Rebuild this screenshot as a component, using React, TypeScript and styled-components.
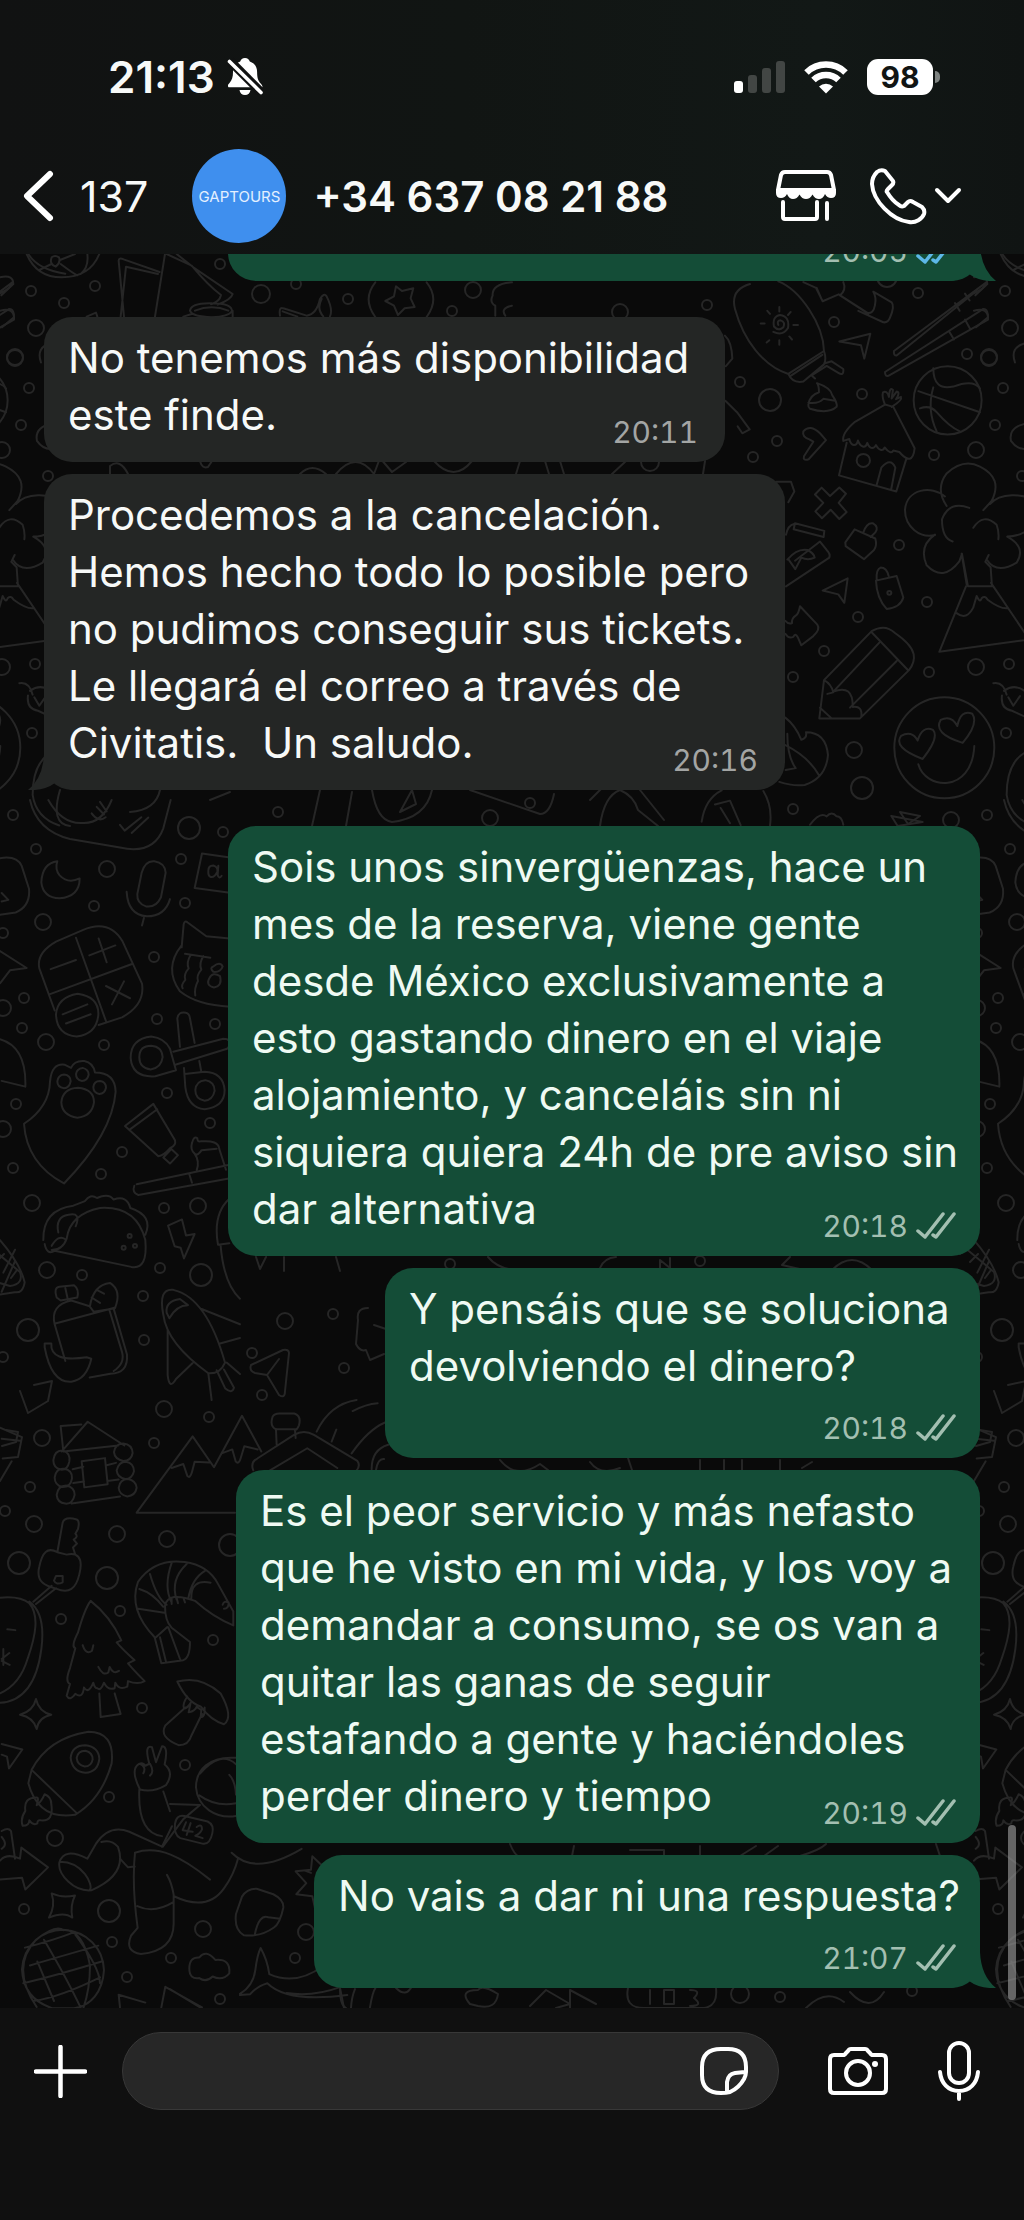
import React from "react";
import styled, { createGlobalStyle } from "styled-components";

const GlobalStyle = createGlobalStyle`
  * { box-sizing: border-box; }
  body {
    margin: 0;
    background: #101010;
    font-family: Inter, "Liberation Sans", sans-serif;
    color: #f7f9f8;
  }
  button {
    background: none;
    border: 0;
    padding: 0;
    color: inherit;
    font: inherit;
    cursor: pointer;
    display: flex;
    align-items: center;
  }
  svg { display: block; flex: none; }
`;

const Screen = styled.div`
  display: flex;
  flex-direction: column;
  min-height: 100vh;
`;

const Header = styled.header`
  background: linear-gradient(90deg, #111212 0%, #111513 45%, #121816 80%, #101413 100%);
`;

const StatusBar = styled.div`
  display: flex;
  align-items: center;
  height: 154px;
  padding: 0 84px 0 108px;
`;

const Clock = styled.time`
  font-size: 44px;
  font-weight: 600;
  margin-right: 12px;
`;

const StatusIcons = styled.div`
  display: flex;
  align-items: center;
  gap: 19px;
  margin-left: auto;
`;

const Battery = styled.span`
  display: flex;
  align-items: center;
  gap: 2px;
`;

const BatteryLevel = styled.span`
  display: flex;
  align-items: center;
  justify-content: center;
  width: 66px;
  height: 36px;
  border-radius: 11px;
  background: #fff;
  color: #111514;
  font-size: 30px;
  font-weight: 700;
`;

const BatteryTip = styled.span`
  width: 5px;
  height: 12px;
  border-radius: 0 6px 6px 0;
  background: #7e8381;
`;

const Nav = styled.nav`
  display: flex;
  align-items: center;
  height: 84px;
  margin-bottom: 16px;
  padding: 0 62px 0 22px;
`;

const BackButton = styled.button`
  gap: 25px;
  font-size: 43px;
`;

const Avatar = styled.span`
  display: flex;
  align-items: center;
  justify-content: center;
  width: 94px;
  height: 94px;
  margin: 0 27px 0 44px;
  border-radius: 50%;
  background: #3f8fee;
  color: #e4f0ff;
  font-size: 15px;
`;

const Contact = styled.h1`
  margin: 0;
  font-size: 42px;
  font-weight: 600;
  white-space: nowrap;
`;

const NavActions = styled.div`
  display: flex;
  align-items: center;
  gap: 34px;
  margin-left: auto;
`;

const CallButton = styled.button`
  gap: 7px;
`;

const Thread = styled.main`
  position: relative;
  flex: 1;
  overflow: hidden;
  background: #0a0a0a;
`;

const Wallpaper = styled.svg`
  position: absolute;
  inset: 0;
  width: 100%;
  height: 100%;
  fill: none;
  stroke: #262626;
  stroke-width: 2;
  stroke-linecap: round;
  stroke-linejoin: round;

  path, ellipse, circle { vector-effect: non-scaling-stroke; }
`;

const Messages = styled.ol`
  position: relative;
  display: flex;
  flex-direction: column;
  gap: 12px;
  margin: -61px 0 0;
  padding: 0 44px 20px;
  list-style: none;
`;

const Bubble = styled.li<{ $mine?: boolean; $turn?: boolean; $width: number }>`
  position: relative;
  align-self: ${(p) => (p.$mine ? "flex-end" : "flex-start")};
  width: ${(p) => p.$width}px;
  max-width: 100%;
  margin-top: ${(p) => (p.$turn ? 24 : 0)}px;
  padding: 12px 24px 19px;
  border-radius: 28px;
  background: ${(p) => (p.$mine ? "#144d37" : "#242625")};
  color: ${(p) => (p.$mine ? "#effaf3" : "#f7f9f8")};
`;

const Line = styled.span`
  display: block;
  min-height: 57px;
  font-size: 42px;
  line-height: 57px;
  white-space: pre;
`;

const LastRow = styled.div`
  display: flex;
  align-items: flex-end;
  justify-content: space-between;
`;

const Meta = styled.span<{ $mine?: boolean; $below?: boolean }>`
  display: flex;
  align-items: center;
  justify-content: flex-end;
  gap: 8px;
  padding-top: ${(p) => (p.$below ? 23 : 0)}px;
  padding-right: ${(p) => (p.$mine ? 0 : 3)}px;
  color: ${(p) => (p.$mine ? "#a3bfb1" : "#a3a5a4")};
  font-size: 30px;
  font-variant-numeric: tabular-nums;
  line-height: 22px;

  svg { margin: -3px 0; }
`;

const Tail = styled.svg<{ $mine?: boolean }>`
  position: absolute;
  bottom: 0;
  ${(p) => (p.$mine ? "right: -16px;" : "left: -16px; transform: scaleX(-1);")}
  fill: ${(p) => (p.$mine ? "#144d37" : "#242625")};
`;

const ScrollThumb = styled.span`
  position: absolute;
  right: 8px;
  bottom: 8px;
  width: 8px;
  height: 175px;
  border-radius: 4px;
  background: rgba(150, 150, 150, 0.65);
`;

const Composer = styled.form`
  display: flex;
  align-items: center;
  gap: 35px;
  padding: 24px 44px 110px 34px;
  background: #101010;
`;

const Field = styled.div`
  display: flex;
  flex: 1;
  align-items: center;
  min-width: 0;
  height: 78px;
  padding: 0 30px;
  border: 1px solid #383838;
  border-radius: 39px;
  background: #272727;
`;

const TextInput = styled.input`
  flex: 1;
  width: 100%;
  min-width: 0;
  border: 0;
  outline: 0;
  background: none;
  color: inherit;
  font: inherit;
  font-size: 42px;
`;

const ComposerActions = styled.div`
  display: flex;
  align-items: center;
  gap: 50px;
  margin-left: 14px;
`;

const line = {
  fill: "none",
  stroke: "#fff",
  strokeLinecap: "round" as const,
  strokeLinejoin: "round" as const,
};

const MutedBell = () => (
  <svg width="36" height="40" viewBox="0 0 36 40" aria-label="Silencio" role="img">
    <path fill="#fff" d="M18 1c2.500 0 4.300 1.500 4.800 3.600 4.700 1.600 7.300 5.400 7.300 10.400 0 6 1 9 4.200 12.200.9 1 1.200 1.800 1.200 3H1.500c-1.200-1.600-.3-2.800 1-4.200C5 23 6 20 6 15 6 10 8.700 6.200 13.200 4.600 13.700 2.500 15.500 1 18 1zM12.500 33h11c-.3 3-2.500 5-5.500 5s-5.200-2-5.500-5z" />
    <path d="M3 4l31 31" stroke="#111212" strokeWidth="9" />
    <path d="M2.500 4.500l31.500 31" stroke="#fff" strokeWidth="3.600" strokeLinecap="round" />
  </svg>
);

const Signal = () => (
  <svg width="51" height="33" viewBox="0 0 51 33" aria-label="Cobertura" role="img">
    <rect y="20" width="9" height="12" rx="3" fill="#fff" />
    <rect x="14" y="14" width="9" height="18" rx="3" fill="#424644" />
    <rect x="28" y="7" width="9" height="25" rx="3" fill="#424644" />
    <rect x="42" width="9" height="32" rx="3" fill="#424644" />
  </svg>
);

const Wifi = () => (
  <svg width="44" height="33" viewBox="0 0 44 33" aria-label="Wi-Fi" role="img">
    <g fill="none" stroke="#fff" strokeWidth="6.500">
      <path d="M2.500 11.500a28 28 0 0 1 39 0" />
      <path d="M9.500 19a18 18 0 0 1 25 0" />
    </g>
    <path fill="#fff" d="M15 25.500a10.500 10.500 0 0 1 14 0L22 32.500z" />
  </svg>
);

const BackIcon = () => (
  <svg width="33" height="52" viewBox="0 0 33 52">
    <path {...line} strokeWidth="6" d="M28 4L5 26l23 22" />
  </svg>
);

const StoreIcon = () => (
  <svg width="60" height="52" viewBox="0 0 60 52">
    <path {...line} strokeWidth="4" d="M9 2h42q3 0 4 3l3 15H2L5 5q1-3 4-3z" />
    <path fill="#fff" d="M0 19h60v4q0 5-5 5-4 0-6-4-2 5-6 5t-6.500-4.500Q34 29 30 29t-6.500-4.500Q21 29 17 29t-6-5q-2 4-6 4-5 0-5-5z" />
    <path {...line} strokeWidth="4" d="M7 32v15q0 2 2 2h30q2 0 2-2V32M51 33v16" />
  </svg>
);

const PhoneIcon = () => (
  <svg width="57" height="57" viewBox="0 0 57 57">
    <path {...line} strokeWidth="4" d="M15 3Q11 1 7 4 2 9 2 16c1 17 20 36 37 38 7 1 13-3 15-8 1-3 0-5-2-7l-9-5q-3-2-5 0l-4 4c-2 1-4 0-5-1-5-3-9-8-12-13q-1-1 1-3l4-4q2-2 1-4z" />
  </svg>
);

const ChevronDown = () => (
  <svg width="28" height="18" viewBox="0 0 28 18">
    <path {...line} strokeWidth="4" d="M3 3l11 11L25 3" />
  </svg>
);

const Ticks = ({ read }: { read?: boolean }) => (
  <svg width="40" height="28" viewBox="0 0 40 28" aria-label={read ? "Leído" : "Entregado"} role="img">
    <path {...line} stroke={read ? "#5db8e8" : "#a3bfb1"} strokeWidth="3.500" d="M2 19l7 6L27 2M17 23l3 2L38 2" />
  </svg>
);

const PlusIcon = () => (
  <svg width="53" height="53" viewBox="0 0 53 53">
    <path {...line} strokeWidth="4.500" d="M26.500 2v49M2 26.500h49" />
  </svg>
);

const StickerIcon = () => (
  <svg width="48" height="48" viewBox="0 0 48 48">
    <path {...line} strokeWidth="4" d="M2 24V20Q2 2 21 2h7q18 0 18 18v5q0 3-2 7-5 9-14 13-4 1-9 1Q2 46 2 28zM27 45V35q1-8 8-9l10-1" />
  </svg>
);

const CameraIcon = () => (
  <svg width="60" height="48" viewBox="0 0 60 48">
    <path {...line} strokeWidth="4" d="M6 8h9q2 0 3-2l2-2q1-2 3-2h14q2 0 3 2l2 2q1 2 3 2h9q4 0 4 4v30q0 4-4 4H6q-4 0-4-4V12q0-4 4-4z" />
    <circle {...line} strokeWidth="4" cx="30" cy="26" r="12" />
    <circle cx="47" cy="17" r="3" fill="#fff" />
  </svg>
);

const MicIcon = () => (
  <svg width="42" height="60" viewBox="0 0 42 60">
    <rect {...line} strokeWidth="4" x="11" y="2" width="20" height="40" rx="10" />
    <path {...line} strokeWidth="4" d="M2 31c1 11 8 19 19 19s18-8 19-19M21 50v8" />
  </svg>
);

const bubblesSmall = [
  [707, 305], [834, 322], [918, 293], [967, 354], [740, 382], [862, 394], [777, 441], [753, 457],
  [934, 455], [899, 545], [927, 602], [858, 617], [824, 651], [793, 677], [929, 672], [793, 809],
  [13, 815], [36, 849], [223, 832], [94, 906], [181, 859], [185, 903], [3, 933], [154, 957], [24, 998],
  [22, 1028], [104, 1045], [157, 1019], [215, 1024], [167, 1093], [16, 1104], [122, 1152], [13, 1168],
  [101, 1174], [210, 1123], [164, 1208], [82, 1275], [160, 1268], [143, 1296], [144, 1340], [209, 1417],
  [154, 1443], [30, 1487], [120, 1611], [61, 1619], [213, 1640], [142, 1708], [185, 1765], [109, 1797],
  [24, 1909], [112, 1942], [171, 1958], [127, 1977], [220, 1999], [295, 1958], [31, 291], [64, 303],
  [95, 286], [220, 264], [296, 284], [348, 299], [452, 311], [29, 388], [21, 425], [48, 476], [35, 664],
  [32, 733], [333, 1314], [252, 1353], [344, 1368], [262, 1395], [278, 812], [530, 803], [450, 1264],
  [700, 1261], [780, 1997], [912, 1991], [5, 1511], [3, 1357],
];

const bubblesLarge = [
  [770, 400, 11], [989, 357, 8], [976, 450, 8], [976, 667, 8], [854, 750, 8], [862, 788, 11],
  [951, 820, 8], [189, 828, 11], [107, 869, 8], [43, 922, 8], [3, 1008, 8], [46, 1042, 8],
  [3, 1129, 8], [32, 1203, 8], [198, 1206, 8], [47, 1270, 8], [201, 1275, 11], [28, 1330, 11],
  [42, 1438, 8], [164, 1409, 8], [34, 1524, 8], [117, 1534, 8], [167, 1539, 8], [19, 1563, 11],
  [107, 1578, 11], [55, 1838, 8], [109, 1911, 11], [203, 1929, 8], [306, 1932, 8], [36, 328, 8],
  [261, 294, 9], [473, 290, 8], [15, 358, 8], [285, 1321, 8], [490, 818, 8], [740, 1994, 9],
  [887, 277, 10], [650, 462, 9], [230, 1545, 11], [620, 312, 8],
];

/* Balloon, chopsticks, hut, tree, pencil, smiley */
const doodlesTop = [
  "M150 115Q90 130 105 180C130 260 190 330 265 350L372 290C370 220 300 130 235 108M265 350q12 25 45 20l62-45q8-15 0-35M272 355l95-55M375 322l20-5 35 20q2 20-15 10l-35-18-45 25 10 8",
  "M235 222q-5-12 7-12 15 4 8 18-14 12-28-2-6-26 18-30 30 4 24 34-16 22-44 10M238 175v12M238 262v12M182 218h12M280 222h14M202 185l8 8M268 252l8 8M272 188l-8 8M208 262l-8 6",
  "M310 110l38 15 20 35 48-18 90 50M350 125l15 30M430 110q10 20-10 35l80 45q20 5 25-20 5-20-5-35l55 28q10 10-5 40-6 14-20 12l-75-30",
  "M418 265l93-20-18 65-10-35zM582 290L860 110q-5 18-40 30L590 302q-10 0-8-12zM765 165l14 20M795 140l14 18M555 345l295-165q16 0 14 28L565 355q-10 2-10-10zM748 240l14 20M795 208l16 25",
  "M325 430q5-25 32-32 0-18-6-24 42 12 46 32 16 20 13 30-25 20-80 5-6-4-5-11zM325 425q30 4 45-10l35 5",
  "M555 430l-90 45q-40 30-35 50l18-5c5 20 22 20 26 4 8 18 22 22 28 6 8 18 20 16 26 6 10 16 22 16 26 6 12 14 22 16 26 8l18 4q40 40 46-10L580 436zM555 430q-10-20-6-32 12-6 18 12 2-28 12-18l-4 22 15-18q12 2-2 20l15-6q5 8-28 26M440 530l-23 85 172 42 30-85M530 640l14-45q28-28 42 0l-12 55",
  "M310 500q20-20 50 5l18 18-52 50q-18 5-14-8l28-38-12-6q-22-6-18-21z",
  "M345 665l20-18 25 22 28-22 20 16-22 24 24 24-22 18-26-24-26 22-20-18 24-22zM285 740l88 20-2 16-90-20zM258 770q6-25 24-28",
  "M262 835q30-30 60-25 20 8 22 20-20 8-40 0l-18 30-20-25M258 905l130-75q4-10-8-20l-20-22-75 50",
  "M436 790l28-34 62 24q6 18-4 30l-30 24-55-34zM490 764q10-26 28-24 20 10 8 24l-14 12M368 916l75-32-10 64-18-22zM528 890l62-12 20 56q-8 26-50 30-30-28-32-74zM530 888q-2-28 12-32 18 0 24 22",
  "M256 995q10 10 20 6-2-12 12-20 8-5 12-24l52 48q10 12-12 30l-36 24-10-20q-8-14-14-2-14 6-24-8",
  "M358 1250l14-100L515 1022q40-20 70 5 50 30 56 55 5 20-14 42L480 1250zM515 1025l110 100M538 1052L400 1180M590 1100L450 1222M372 1150q22 10 28 32l-18 4M400 1180q60-20 58 40 30-4 26 26M360 1222l35 28",
  "M740 695q-35-45 0-85 50-40 100-18 70 30 35 90l-25 24M735 670c-40-30-115-20-120 35 0 45 45 75 90 66M705 770q-50 30-25 80 50 45 98-10l8-20 18 85h72l-4-50-16-14 10-18M860 835q30 40 90 8 30-40-28-68 50 0 90-40M870 690c30-30 100-30 140-5M808 700q-60-20-82 30 0 50 32 58M820 752q30-40 70-8 8 20 5 38M798 905L718 1076l270-32-115-148M785 820l15 80M770 975q30 20 50-15l10-30q10 20 15 6 10-8 18 4 40 26 62 22",
  "M908 38q30 40 110 50M945 320q-16-40 30-50M975 480q-50 10-42 45 20 25 50 20",
  "M655 1370c20 65 160 80 168-48M668 1356q-90-30-65-60 32-16 50 12 14-40 46-28 20 20-31 76zM788 1314q-90-24-66-60 32-14 50 16 10-44 45-32 20 26-29 76z",
  "M256 1248q30 20 48 58 18-4 14-20 60 0 66 60-6 60-70 78-35 4-76-8M256 1320q70 30 102 80M262 1290q0 60 25 90l-30 5",
  "M5 1520q10-60 60-82M190 1440q28 40 20 90M45 1475l45-10 32 64M62 1484l28 40M330 1528q30-35 50-22 15-15 30 0 15 0 20 22M574 1505l94 16-75 10z",
  "M75 250q20 15 22 60l-20 20M76 420l35 30 38 45-22 10-14-18M228 632h45l10 25-18 28",
  "M880 1158q30-5 40 30M912 1178q40-25 80 15M906 1190q-5 35 30 40l50 20M925 1195l15 22 20-25M1000 1330q-80 20-80 120 10 60 80 80",
];

/* Moon, calculator, scissors, guitar pick, taco, backpack, shuttle */
const doodlesMiddle = [
  "M90 0q20 80 120 102l150 22q100 20 130-50L512 0M145 0q40 62 100 60 60 4 90-60M275 35q20 25 42 10M290 18l22 20M300 5l20 25M360 65l14 15 50-35M395 86l50-40",
  "M172 160q-45 5-48 55 5 40 55 42 60-5 60-52-35 15-60-8-15-16-7-37z",
  "M0 152q50-8 65 20l22 60q5 45-40 62L0 300M5 243l20 18-20 4",
  "M425 190q10-32 38-30 32 4 34 30l-14 64q-15 28-45 24-28-8-26-32zM380 240q4 60 60 64 55 0 70-45M432 308l-6 20",
  "M690 150l-84-10-22 90 100 12M625 185q0-14 15-14 15 4 12 16-8 16-20 14-8-2-7-16M655 172l-2 24q4 12 12 2",
  "M118 440q-10-40 50-70l80-30q80-30 120 30l58 110q10 55-60 88l-70 20M118 440l46 110M228 360l90 218M148 508l250-80M152 442l76-24M268 406l78-26M296 362l24 62M318 486l72 32M372 474l-36 60",
  "M168 560q4-45 65-54 65 8 62 56-6 50-65 56-60-4-62-58zM188 560l74-26M198 584l74-24",
  "M545 385l6-60q3-12 12-5l56 36 70 6M545 380q-55 60-5 120 50 36 150 40M555 402l76 10M572 405q-14 20-6 35-16 16-10 30-14 14-8 22M610 408q-14 20-6 35-16 16-10 30-12 20-8 38M640 435q20-14 28 0-6 16-28 14-12-10 0-14M628 466q10-18 32-6 8 26-18 30-26-6-14-24",
  "M540 645l-8-74q4-20 26-15 10 2 12 15l14 64M520 658l150-34q25 0 18 18-2 8-14 10l-148 40M528 706l-62 16q-70 4-74-48 0-50 62-56 40 4 56 32zM418 672q0-30 36-30 32 2 34 30-4 28-36 32-34-4-34-32zM552 700l4 50q8 54 58 58 60-6 60-50-4-46-60-48l-60 6M598 682l6 28M586 758q2-24 30-26 28 4 28 28-6 24-30 26-28-4-28-28z",
  "M72 846q76-44 78-110 5-50 45-44l18 8q10-20 40-18 26 4 32 30 60 0 62 50-10 110-155 240Q80 950 72 846z",
  "M172 735q2-16 20-18 20 2 20 18-4 18-20 18-20-2-20-18zM228 716q2-14 20-16 18 4 18 18-4 16-20 16-18-2-18-18zM280 750q2-16 20-16 18 2 18 18-4 16-20 16-18-2-18-18zM184 790q4-36 50-38 48 4 48 38-6 36-50 40-46-6-48-40z",
  "M375 852l85-58 65 95q4 14-14 20-20 20-36 22zM388 862l84-54M490 934l24-22 20 16-24 22z",
  "M590 968q10-24-6-44-14-10-8-28 6-20 16-12 0 10 10 8 54-4 56 20l20 54M585 925q8 6 20-10l45-4M410 1004l275-50M415 1032q-20-6-12-24M415 1032l280-44M568 978l8 22",
  "M130 1150q-2-80 90-90l35-12q15-20 36-8 35-14 50 4 40-12 50 22 70 20 45 70M134 1160q6 30 30 18l230 42q50 8 42-70Q410 1060 300 1066q-90 16-100 80-12 30-45 30M175 1130q-10-40 30-46 40-8 22 30M155 1165q20-30 40-18",
  "M504 1112l42-16 12 42 26-4-32 64-10-28-18-4z",
  "M688 1042q-50 40-34 120l34-4M662 1165q10 100 58 138",
  "M164 1370q-14-50 50-62l55 15 12 14 60-8 40 120q4 50-50 50l-62 10M166 1368l180-42M164 1370l32 96M328 1332l38 110q10 30-25 50M170 1300q-10-25 8-28l44-4q16 10 10 32l-50 8zM196 1275l8 32M270 1322q10-55 60-60 36 20 15 66M275 1300l25 14M290 1280l22 10",
  "M134 1420h20q-5 50 106 36l14 4q-14 54-60 60-60 4-80-90z",
  "M490 1345q-16-70 30-65 100 20 155 190-14 30-50 28Q500 1420 490 1345zM500 1340q-5-30 40-36l24 16q-34 0-56 34zM503 1385v118q5 40 25 10l50-42M605 1330l115 40M660 1420l60-14M625 1498l10 70M680 1470l40 30M650 1490l26 48q20 15 26-2l-30-48",
  "M0 395l80 44-50 6-30 34M0 625q80 20 76 124L5 734M0 1150q60 60 74 110-5 30-30 26l-44 6M10 1235l35-60M5 1285l40-80",
];

/* Cabin, mountains, key, shrimp, pine, mushroom, rocket, astronaut, globe, whale */
const doodlesBottom = [
  "M185 130L263 55l110 60M190 130l-8-64 62-4M190 130l165-15M160 152q4-26 30-24 22 6 18 28-6 22-26 20-22-4-22-24zM342 132q4-22 28-22 26 2 28 24-4 20-28 20-26-4-28-22zM164 196q4-24 28-22 26 4 24 24-4 22-28 22-24-4-24-24zM350 178q6-22 28-22 24 4 24 24-6 20-26 20-24-4-26-22zM170 240q4-24 28-24 26 4 26 24-6 24-28 22-24-2-26-22zM356 222q4-22 28-22 24 4 26 22-4 20-28 22-24-4-26-22zM245 155l70-8 8 66-70 8zM218 175l32-6M220 210l32-4M320 165l28-6M322 205l34-4M215 262l145-18",
  "M705 285H410L578 92l64 78 84-130 58 90M515 172l35-10 12 30q8 8 14-10l8-26 45 2M665 135l32-10 10 30q10 10 16-10l10-28 40 8",
  "M760 178q-10-20 12-30l110-60q30-14 60 0l130 66q10 12-2 24M810 178l112-56 90 50M830 112l-2-38q-20-8-10-32 5-8 20-8h45q22 6 14 30-6 12-12 12l2 20M830 74h58M950 80q40-70 120-80M1058 28q40-18 75-20M995 105l14-30M1055 135q50-60 100-78M1115 175q0-50 50-62",
  "M172 385l16-75q6-16 42-8 10 4 4 24l-8 12q10 8-5 15l10 10-12 10 6 16M172 385c-30-14-45 0-54 36-12 40 20 50 50 56 40 14 60 0 70-36 14-46-10-56-38-50zM168 445l20 0 0 16q-20 8-26-4zM155 470l-55 40M168 476l-60 40",
  "M0 500q60-5 88 14c30 30 20 80-5 140Q60 720 0 742M88 510q50 30 36 120-20 130-124 136M22 580l24 2M10 630v40M5 660l24 10M28 640L5 655",
  "M272 508q60 40 92 100l-14 5q20 20 54 45l-20 8q20 20 50 45-20 10-50 0l-2 14q-26 10-36-10l-2 14q-20 6-32-14-10 22-20 14-8 0-12-14-15 30-28 12-4 30-26 16-16 20-26 5l10-30q-16-5 0-40l16-50q-14-4 8-40 20-60 38-80zM248 620q10 26 28 14l4-14M295 675q14 24 30 14l4-14q10 20 28 10M298 742l4 60 60-8-18-52",
  "M700 570Q640 550 585 508q-80-25-90 12 0 40 20 56l55 36q0 40-20 46l-66 8-20-66q-80-70-50-140 50-60 140-50 70 8 100 55l46 70zM415 528l78 10M418 478q40 10 72 45M450 440q20 60 50 78M515 412q-25 60 0 100M560 415q-50 40-30 90M615 432q-40 20-50 70M632 462q-60-10-58 40M468 600l34-26M480 600l18 62M505 575l35 80M515 500v16M530 500l4 14M550 500l5 12M668 518q4-12 18-6 0 16-14 16",
  "M532 712q70-16 130 30 40 60 10 78-40-10-70-45-40-10-70-63zM562 750q-16 20-10 30 10 0 20-14l-6 24q20-4 24-14l14 8-2 18q14 0 12-24M556 778l-60 45q-20 30 40 50 30 0 38-24l32-55",
  "M60 796q40-10 48-40 8 32 46 40-38 6-44 36-10-30-50-36zM5 870l62 14-40 48-6-30-16-5",
  "M95 935q50-80 170-96 80 0 70 80-30 90-110 130-110 14-140-80zM98 938l130 105M212 905q4-32 44-32 40 4 42 34-4 34-42 36-40-4-44-38zM230 905q4-18 26-18 22 4 22 22-4 18-24 18-22-4-24-22zM110 1005q-40 0-34 34-16 20-8 38 20 0 20-14 10 14 24 8 0-10 10-8 40 4 32-40 0-20-20-26-10 20-24 28 8-20 0-20z",
  "M420 985q-30-50-4-64 14-6 20 4l12-5q-16-50 8-42l12 38 18-40q20 0 8 46 30 20 4 52-40 20-78 11zM420 920q20 8 10 24M450 920q14 20 0 30M418 985q-6 110 68 118M490 990l20 50M510 1022l90 2-50 36-62 70-100-38q-60-20-100 30l-26 38q-70-30-84 10c-5 30 44 74 96 70q110-40 80-110-20-20-50-12M180 1168c70 0 100 60 90 70M486 1130l30-52M360 1160l24 22 20-2M405 1145q-10 80 8 190l-20 20q-20 40 30 46 100-8 98-80v-70q-6-30-20-50M405 1145c70-20 140 10 225 68M412 1280q50 20 108-10M522 1255q100 40 150-20 30-35 42-75M695 1145q70 60 210-10",
  "M708 905c-80-5-120 30-120 75 5 50 60 80 120 72M600 945q60-60 108-24M598 1000q50 30 110 20M688 948q18 16 20 50",
  "M525 1072q4-24 28-20l70 14q20 8 14 30-8 30-30 26l-66-14q-20-8-16-36zM558 1068l-10 20 30 4M572 1070l-12 30M590 1080q16-10 16 6-6 12-20 16l22 6",
  "M0 1165q20-20 60-5l4-28 80 50-68 56-10-30-66 5M5 1090q20-10 28 0l12 70M5 1105q20 20 0 30",
  "M155 1248q30 12 70 5-15 25-8 56-25-16-70 0 20-30 8-61z",
  "M66 1440c4-60 60-100 124-100 70 4 120 46 122 102-4 56-40 90-90 96h-66q-86-24-90-98zM110 1535q-80-100-2-170 60-40 82-24M190 1340q60 0 80 90 0 60-20 108M112 1420l50 100M225 1345q-60 20-150 40M90 1430q80-20 205-50M70 1475q100-20 235-55M100 1520q80-10 200-60M132 1365q70 100 110 172M220 1345q80 90 80 130",
  "M708 1300l18-44q14-20 44-20l50 14q32 14 30 34-10 40-28 50-40 24-90 20-30-14-24-54zM765 1350q12-50 40-42l35 4",
  "M568 1438q0-30 30-28 20-22 48 6 46-4 42 34-20 20-50 8-20 16-40 4-30 4-30-24z",
  "M360 1536l-4-32 80 20M484 1536l12-52 110 52M510 1490l90 46",
  "M720 1502q40-20 46-60 6-40 16-56 20 30 26 66 80 30 160-20M720 1505l30-2q20-20 52-28 60 50 240 30M860 1500q80 10 160-15M1020 1490q0 40 18 48M1065 1490q-10 20-12 48M1110 1536q8-40 16-48",
  "M945 1285l-8-30-48-5 30-28-32-30 46-4 4-34 30 24 34-20-8 30M915 1190l18 6",
  "M0 70l66 24-12 50-46 4M5 98l55 5M0 205l35-50",
];

/* Open book, star badge, leaves, along the top edge */
const doodlesEdge = [
  "M80 0q30 70 105 70Q270 70 298 0M155 10q10-8 22 0 6 16-10 28-20-8-12-28zM118 48l36-18M180 18l45-18M182 30q40 30 50 34M262 0q5 40-20 60",
  "M372 188L356 20q0-10 15-4l108 38M362 188l16-150 96 22M465 188L495 0M500 0l75 35q50 60 88 88-4 20-30 28M530 0l50 40 118 80q-4 16-45 32M570 170q4-24 66-22 60 0 60 24-10 16-60 18-60-2-66-20zM585 170q50-20 100 0M550 188l25-8M698 170v18",
  "M0 70q40-10 40 20l-36 34M0 170q40-10 42 20l-36 30M260 188l28-12 4 12M840 185q-4-28 10-22l70 22q30-4 40-50 12-20 20-8 20 40 10 60M848 172l44 16M965 135q-16 30 5 52",
  "M1126 85q-40 50 0 104M1280 85q40 50 0 104M1188 97l18 14 34-8-8 30 12 26-30 4-20 20-12-28-26-14 26-14zM1536 85q-60 4-58 40-10 20 8 30v30M1536 155q-36 8-20 30",
];

/* Fragments visible between the bubbles */
const doodlesGaps = [
  "M110 474v-8q10-8 18 8M200 461q2 8 8 6l4-6M300 474q12-12 26 0M336 474q20-24 38 0l6-16 12 14 14-10M434 461q20 22 38 0M520 461l-4 13M545 461l4 13M560 461l4 13M626 461l-14 13M705 461l-2 13",
  "M60 790q-10 34 10 36M160 790q-4 20-30 22M210 800l20-8M312 826l8-36M352 792l-6 34M372 790q5 30 20 32 34-4 40-32M400 812l12-22 4 14zM470 790l70 24q10 0 14-20M590 800l14-14M600 826q4-30 20-36 14 6 18 20l20 16M640 790l24 30M900 812l20 4-12 8z",
  "M256 1257l4 12 6-12M284 1257v14M336 1257l4 14M488 1257q10 12 28 13M600 1268q4-10 16-11M660 1268v-8l10 8v-10M790 1257l-8 8 22 5M832 1270q20-20 40 0M958 1242l36 30q4 12-10 14l-14-4M960 1254l12-10M970 1262l8-8M985 1278l6-8",
  "M376 1470q2-12 8-11M500 1460q16 20 40 4l8 6M590 1462q10 14 30 6M632 1470l-4-12M700 1460v10M724 1460v10M742 1460v10M780 1460v10M802 1468l10-6M980 1430l12 2-2 10-14 4M1008 1385l18-4-4 20-20 12-8-22",
  "M340 1988l4 20M396 1988q10 10 16-2M470 2004q-12-14 8-14 4-6 20 4-2 16-20 12zM530 2006l16-16 24 14-14 4M570 2008v-18l26 14M628 1988q-4 20 16 20h60q14-2 12-20M650 1990v14M664 1990v14h10v-14zM690 1990q12 0 4 8 10 8-4 8M806 2008q20-20 38-6M850 1992q20 22 34 0",
  "M510 1844q8 20 20 12M572 1856l2-10M630 1850h34v6M700 1846v10M740 1856l16-10M764 1856l14-10M800 1856q20-6 26-12M936 1844l4 12",
];

const DoodleTile = () => (
  <g id="doodles">
    <g transform="translate(700 240) scale(.3333 .3827)">
      {doodlesTop.map((d) => <path key={d} d={d} />)}
      <ellipse cx="490" cy="576" rx="20" ry="17" />
      <ellipse cx="743" cy="419" rx="102" ry="89" />
      <path d="M700 335q0 60 60 48 60-20 80 5M655 395l185 55M700 385q-20 60 10 115M660 440q30-10 50 10 40 40 70 50" />
      <ellipse cx="568" cy="922" rx="6" ry="5" />
      <ellipse cx="733" cy="1327" rx="150" ry="132" />
    </g>
    <g transform="translate(0 800) scale(.3333 .3827)">
      {doodlesMiddle.map((d) => <path key={d} d={d} />)}
      <ellipse cx="389" cy="1139" rx="6" ry="5" />
      <ellipse cx="371" cy="1170" rx="6" ry="5" />
      <ellipse cx="405" cy="1165" rx="6" ry="5" />
    </g>
    <g transform="translate(0 1400) scale(.3333 .3954)">
      {doodlesBottom.map((d) => <path key={d} d={d} />)}
    </g>
    <g transform="translate(0 254) scale(.3333)">
      {doodlesEdge.map((d) => <path key={d} d={d} />)}
    </g>
    {doodlesGaps.map((d) => <path key={d} d={d} />)}
    <path d="M283 1350l-32 15q-2 6 4 8l12 2 12 20q6 4 6-4l4-38q0-4-6-3zM267 1375l12-16M368 1308q-12 0-10 12l-2 24q4 8 10 6l4 10 14-6M374 1325l12 4" />
    {bubblesSmall.map(([x, y]) => <circle key={`${x}-${y}`} cx={x} cy={y} r="5" />)}
    {bubblesLarge.map(([x, y, r]) => <circle key={`${x}-${y}`} cx={x} cy={y} r={r} />)}
  </g>
);

type Message = {
  id: number;
  lines: string[];
  time: string;
  width: number;
  mine?: boolean;
  turn?: boolean;
  tail?: boolean;
  below?: boolean;
  read?: boolean;
};

const messages: Message[] = [
  { id: 0, lines: [""], time: "20:05", width: 752, mine: true, tail: true, read: true },
  { id: 1, lines: ["No tenemos más disponibilidad", "este finde."], time: "20:11", width: 681, turn: true },
  {
    id: 2,
    lines: [
      "Procedemos a la cancelación.",
      "Hemos hecho todo lo posible pero",
      "no pudimos conseguir sus tickets.",
      "Le llegará el correo a través de",
      "Civitatis.  Un saludo.",
    ],
    time: "20:16",
    width: 741,
    tail: true,
  },
  {
    id: 3,
    lines: [
      "Sois unos sinvergüenzas, hace un",
      "mes de la reserva, viene gente",
      "desde México exclusivamente a",
      "esto gastando dinero en el viaje",
      "alojamiento, y canceláis sin ni",
      "siquiera quiera 24h de pre aviso sin",
      "dar alternativa",
    ],
    time: "20:18",
    width: 752,
    mine: true,
    turn: true,
  },
  {
    id: 4,
    lines: ["Y pensáis que se soluciona", "devolviendo el dinero?"],
    time: "20:18",
    width: 595,
    mine: true,
    below: true,
  },
  {
    id: 5,
    lines: [
      "Es el peor servicio y más nefasto",
      "que he visto en mi vida, y los voy a",
      "demandar a consumo, se os van a",
      "quitar las ganas de seguir",
      "estafando a gente y haciéndoles",
      "perder dinero y tiempo",
    ],
    time: "20:19",
    width: 744,
    mine: true,
  },
  {
    id: 6,
    lines: ["No vais a dar ni una respuesta?"],
    time: "21:07",
    width: 666,
    mine: true,
    below: true,
    tail: true,
  },
];

const MessageBubble = ({ message: m }: { message: Message }) => {
  const leading = m.below ? m.lines : m.lines.slice(0, -1);
  const meta = (
    <Meta $mine={m.mine} $below={m.below}>
      <time>{m.time}</time>
      {m.mine && <Ticks read={m.read} />}
    </Meta>
  );
  return (
    <Bubble $mine={m.mine} $turn={m.turn} $width={m.width}>
      {leading.map((text) => <Line key={text}>{text}</Line>)}
      {m.below ? meta : (
        <LastRow>
          <Line>{m.lines[m.lines.length - 1]}</Line>
          {meta}
        </LastRow>
      )}
      {m.tail && (
        <Tail $mine={m.mine} width="44" height="36" viewBox="0 0 44 36" aria-hidden="true">
          <path d="M0 0H28Q29 24 44 36Q28 37 17 29Q12 33 0 36z" />
        </Tail>
      )}
    </Bubble>
  );
};

export default function App() {
  return (
    <Screen>
      <GlobalStyle />
      <Header>
        <StatusBar>
          <Clock>21:13</Clock>
          <MutedBell />
          <StatusIcons>
            <Signal />
            <Wifi />
            <Battery>
              <BatteryLevel>98</BatteryLevel>
              <BatteryTip />
            </Battery>
          </StatusIcons>
        </StatusBar>
        <Nav>
          <BackButton type="button" aria-label="Atrás, 137 chats sin leer">
            <BackIcon />
            137
          </BackButton>
          <Avatar>GAPTOURS</Avatar>
          <Contact>+34 637 08 21 88</Contact>
          <NavActions>
            <button type="button" aria-label="Catálogo"><StoreIcon /></button>
            <CallButton type="button" aria-label="Llamar">
              <PhoneIcon />
              <ChevronDown />
            </CallButton>
          </NavActions>
        </Nav>
      </Header>

      <Thread>
        <Wallpaper viewBox="0 254 1024 1754" preserveAspectRatio="xMidYMin slice" aria-hidden="true">
          <DoodleTile />
          <use href="#doodles" x="974" />
          <use href="#doodles" x="-974" />
        </Wallpaper>
        <Messages>
          {messages.map((m) => <MessageBubble key={m.id} message={m} />)}
        </Messages>
        <ScrollThumb />
      </Thread>

      <Composer>
        <button type="button" aria-label="Adjuntar"><PlusIcon /></button>
        <Field>
          <TextInput type="text" aria-label="Mensaje" />
          <button type="button" aria-label="Stickers"><StickerIcon /></button>
        </Field>
        <ComposerActions>
          <button type="button" aria-label="Cámara"><CameraIcon /></button>
          <button type="button" aria-label="Grabar audio"><MicIcon /></button>
        </ComposerActions>
      </Composer>
    </Screen>
  );
}
